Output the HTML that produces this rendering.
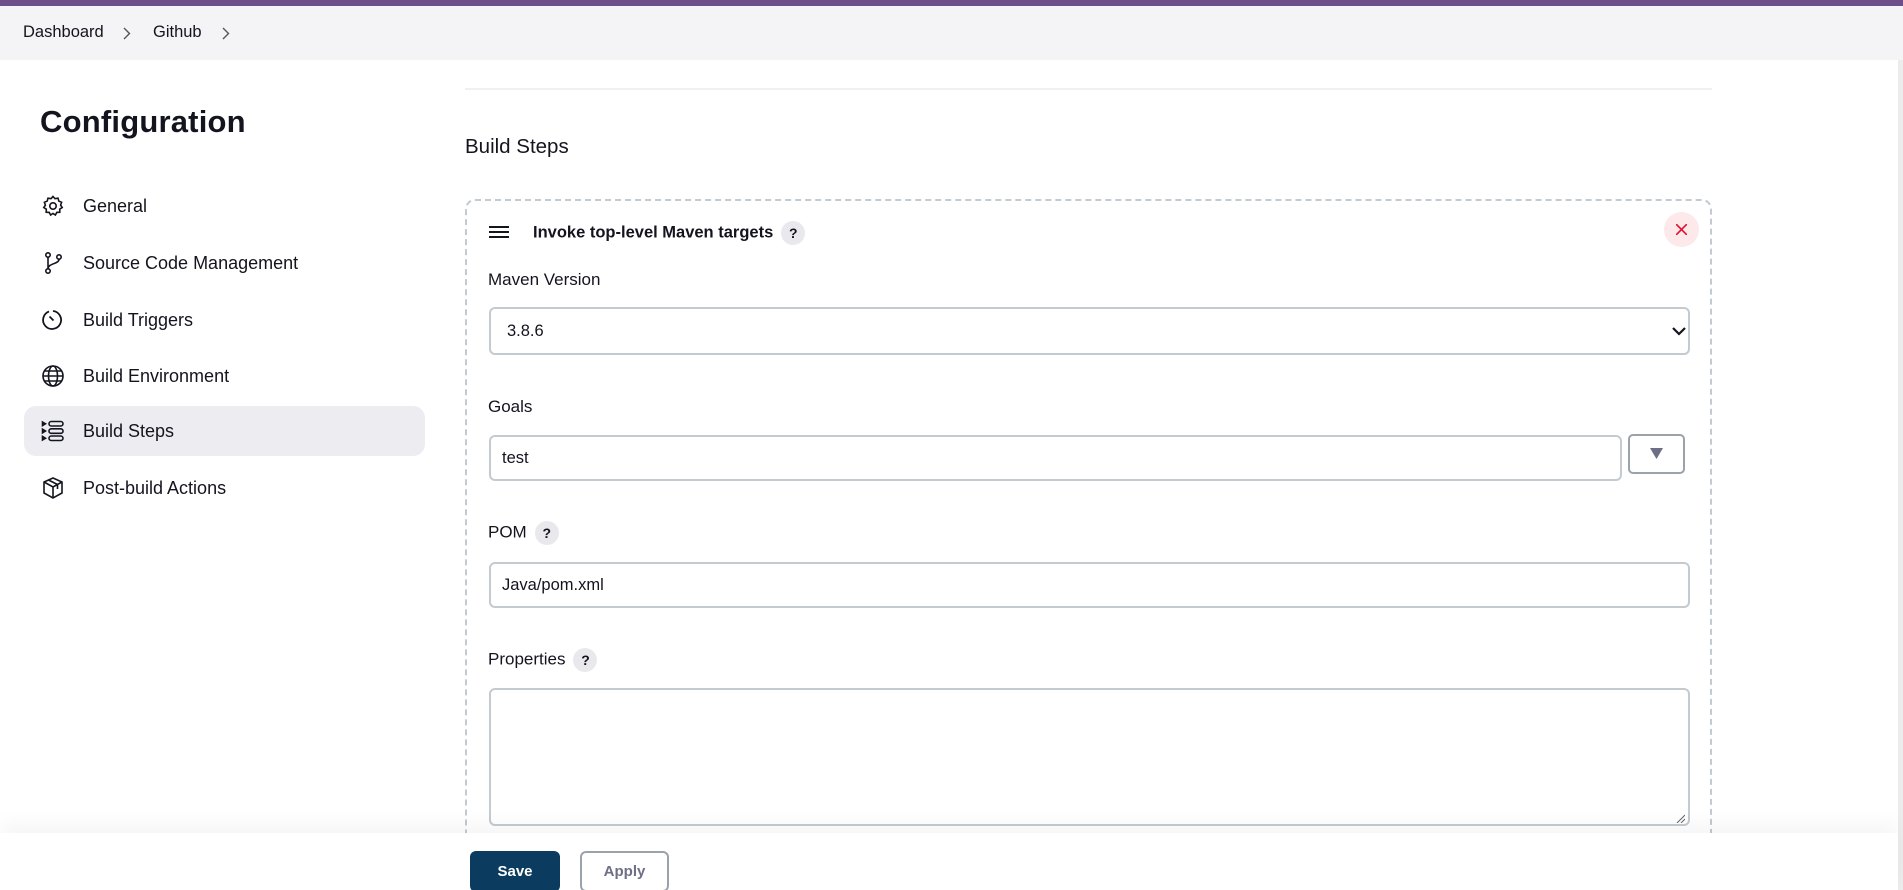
<!DOCTYPE html>
<html><head><meta charset="utf-8">
<style>
*{box-sizing:border-box;margin:0;padding:0}
html,body{width:1903px;height:890px;overflow:hidden;background:#fff;font-family:"Liberation Sans",Arial,sans-serif;color:#14141f;position:relative}
.top{position:absolute;left:0;top:0;width:1903px;height:6px;background:#6b4e8a}
.bc{position:absolute;left:0;top:6px;width:1903px;height:54px;background:#f4f4f6;font-size:16.5px}
.bc span{position:absolute;top:17px}
.bc svg{position:absolute;top:21px}
.scroll{position:absolute;right:0;top:60px;width:5px;height:830px;background:#ececec}
h1{position:absolute;left:40px;top:104px;font-size:31px;font-weight:bold;letter-spacing:0.2px}
.nav{position:absolute;left:24px;width:401px;height:50px;border-radius:12px;font-size:18px}
.nav.act{background:#ededf1}
.nav svg{position:absolute;left:17px;top:13px}
.nav span{position:absolute;left:59px;top:15px}
.hr{position:absolute;left:465px;top:88px;width:1247px;height:2px;background:#f0f0f2}
h2{position:absolute;left:465px;top:135px;font-size:20.5px;font-weight:normal}
.card{position:absolute;left:465px;top:199px;width:1247px;height:661px;border:2px dashed #c3cbd1;border-radius:10px}
.lbl{position:absolute;left:488px;font-size:17px}
.inp{position:absolute;left:489px;width:1201px;border:2px solid #c3cbd1;border-radius:6px;background:#fff;font-size:16.5px;padding-left:14px}
.q{display:inline-block;width:24px;height:24px;border-radius:50%;background:#e9e9ed;text-align:center;line-height:24px;font-size:14px;font-weight:bold;vertical-align:middle;margin-left:8px}
.bar{position:absolute;left:0;top:833px;width:1898px;height:57px;background:#fff;box-shadow:0 -10px 18px rgba(0,0,0,0.04);z-index:5}
.btn{position:absolute;top:851px;height:41px;border-radius:6px;font-size:15px;font-weight:bold;text-align:center;line-height:37px;z-index:6}
</style></head><body>
<div class="top"></div>
<div class="bc"><span style="left:23px">Dashboard</span><svg style="left:123px" width="8" height="13" viewBox="0 0 8 13" fill="none" stroke="#555" stroke-width="1.4"><path d="M1 1l5.5 5.5L1 12"/></svg><span style="left:153px">Github</span><svg style="left:222px" width="8" height="13" viewBox="0 0 8 13" fill="none" stroke="#555" stroke-width="1.4"><path d="M1 1l5.5 5.5L1 12"/></svg></div>
<div class="scroll"></div>
<h1>Configuration</h1>

<div class="nav" style="top:181px"><svg width="24" height="24" viewBox="0 0 24 24" fill="none" stroke="#14141f" stroke-width="1.6"><path d="M12 2.5l2 2.2 3-.5.8 2.9 2.8 1.2-1 2.8 1.6 2.4-2.5 1.7.1 3-3 .2-1.4 2.6-2.4-1.6-2.4 1.6-1.4-2.6-3-.2.1-3-2.5-1.7 1.6-2.4-1-2.8 2.8-1.2.8-2.9 3 .5z"/><circle cx="12" cy="12" r="3.2"/></svg><span>General</span></div>
<div class="nav" style="top:238px"><svg width="24" height="24" viewBox="0 0 24 24" fill="none" stroke="#14141f" stroke-width="1.6"><circle cx="7" cy="4" r="2.2"/><circle cx="7" cy="20" r="2.2"/><circle cx="18" cy="6" r="2.2"/><path d="M7 6.2v11.6M18 8.2c0 5-11 4-11 9.6"/></svg><span>Source Code Management</span></div>
<div class="nav" style="top:295px"><svg width="24" height="24" viewBox="0 0 24 24" fill="none" stroke="#14141f" stroke-width="1.8"><path d="M8 3.5A9 9 0 1 0 12 3v0"/><path d="M8.5 8.5l4 4"/></svg><span>Build Triggers</span></div>
<div class="nav" style="top:351px"><svg width="24" height="24" viewBox="0 0 24 24" fill="none" stroke="#14141f" stroke-width="1.6"><circle cx="12" cy="12" r="10"/><ellipse cx="12" cy="12" rx="4.5" ry="10"/><path d="M2 12h20M3.5 7h17M3.5 17h17"/></svg><span>Build Environment</span></div>
<div class="nav act" style="top:406px"><svg width="24" height="24" viewBox="0 0 24 24" fill="none" stroke="#14141f" stroke-width="1.6"><path d="M1.5 3l3 1.8-3 1.8zM1.5 10.2l3 1.8-3 1.8zM1.5 17.4l3 1.8-3 1.8z" fill="#14141f"/><rect x="8" y="2.5" width="14" height="4.5" rx="2.2"/><rect x="8" y="9.8" width="14" height="4.5" rx="2.2"/><rect x="8" y="17" width="14" height="4.5" rx="2.2"/></svg><span>Build Steps</span></div>
<div class="nav" style="top:463px"><svg width="24" height="24" viewBox="0 0 24 24" fill="none" stroke="#14141f" stroke-width="1.6"><path d="M12 2l9 4v11l-9 5-9-5V6z"/><path d="M3 6l9 5 9-5M12 11v11M7.5 4l9 4.5v4.5"/></svg><span>Post-build Actions</span></div>

<div class="hr"></div>
<h2>Build Steps</h2>
<div class="card"></div>
<svg style="position:absolute;left:489px;top:225px" width="20" height="14" viewBox="0 0 20 14" stroke="#14141f" stroke-width="2"><path d="M0 2h20M0 7h20M0 12h20"/></svg>
<div style="position:absolute;left:533px;top:221px;font-size:16.5px;font-weight:bold">Invoke top-level Maven targets<span class="q">?</span></div>
<div style="position:absolute;left:1664px;top:212px;width:35px;height:35px;border-radius:50%;background:#fde8ea"></div>
<svg style="position:absolute;left:1676px;top:224px" width="11" height="11" viewBox="0 0 11 11" stroke="#e0102e" stroke-width="1.6"><path d="M0 0l11 11M11 0L0 11"/></svg>

<div class="lbl" style="top:270px">Maven Version</div>
<div class="inp" style="top:307px;height:48px;line-height:44px;padding-left:16px">3.8.6</div>
<svg style="position:absolute;left:1672px;top:327px" width="14" height="9" viewBox="0 0 14 9" fill="none" stroke="#14141f" stroke-width="2.2"><path d="M1 1l6 6 6-6"/></svg>

<div class="lbl" style="top:397px">Goals</div>
<div class="inp" style="top:435px;width:1133px;height:46px;line-height:42px;padding-left:11px">test</div>
<div style="position:absolute;left:1628px;top:434px;width:57px;height:40px;border:2px solid #9aa2ab;border-radius:5px"></div>
<svg style="position:absolute;left:1650px;top:448px" width="13" height="11" viewBox="0 0 13 11"><path d="M0 0h13L6.5 11z" fill="#6e6e85"/></svg>

<div class="lbl" style="top:521px">POM<span class="q">?</span></div>
<div class="inp" style="top:562px;height:46px;line-height:42px;padding-left:11px">Java/pom.xml</div>

<div class="lbl" style="top:648px">Properties<span class="q">?</span></div>
<div class="inp" style="top:688px;height:138px"></div>
<svg style="position:absolute;left:1676px;top:814px" width="9" height="9" viewBox="0 0 9 9" stroke="#666" stroke-width="1"><path d="M9 1L1 9M9 5L5 9"/></svg>

<div class="bar"></div>
<div class="btn" style="left:470px;width:90px;background:#0b3b5e;color:#fff;line-height:41px">Save</div>
<div class="btn" style="left:580px;width:89px;border:2px solid #9aa2ab;color:#6e6e85">Apply</div>
</body></html>
